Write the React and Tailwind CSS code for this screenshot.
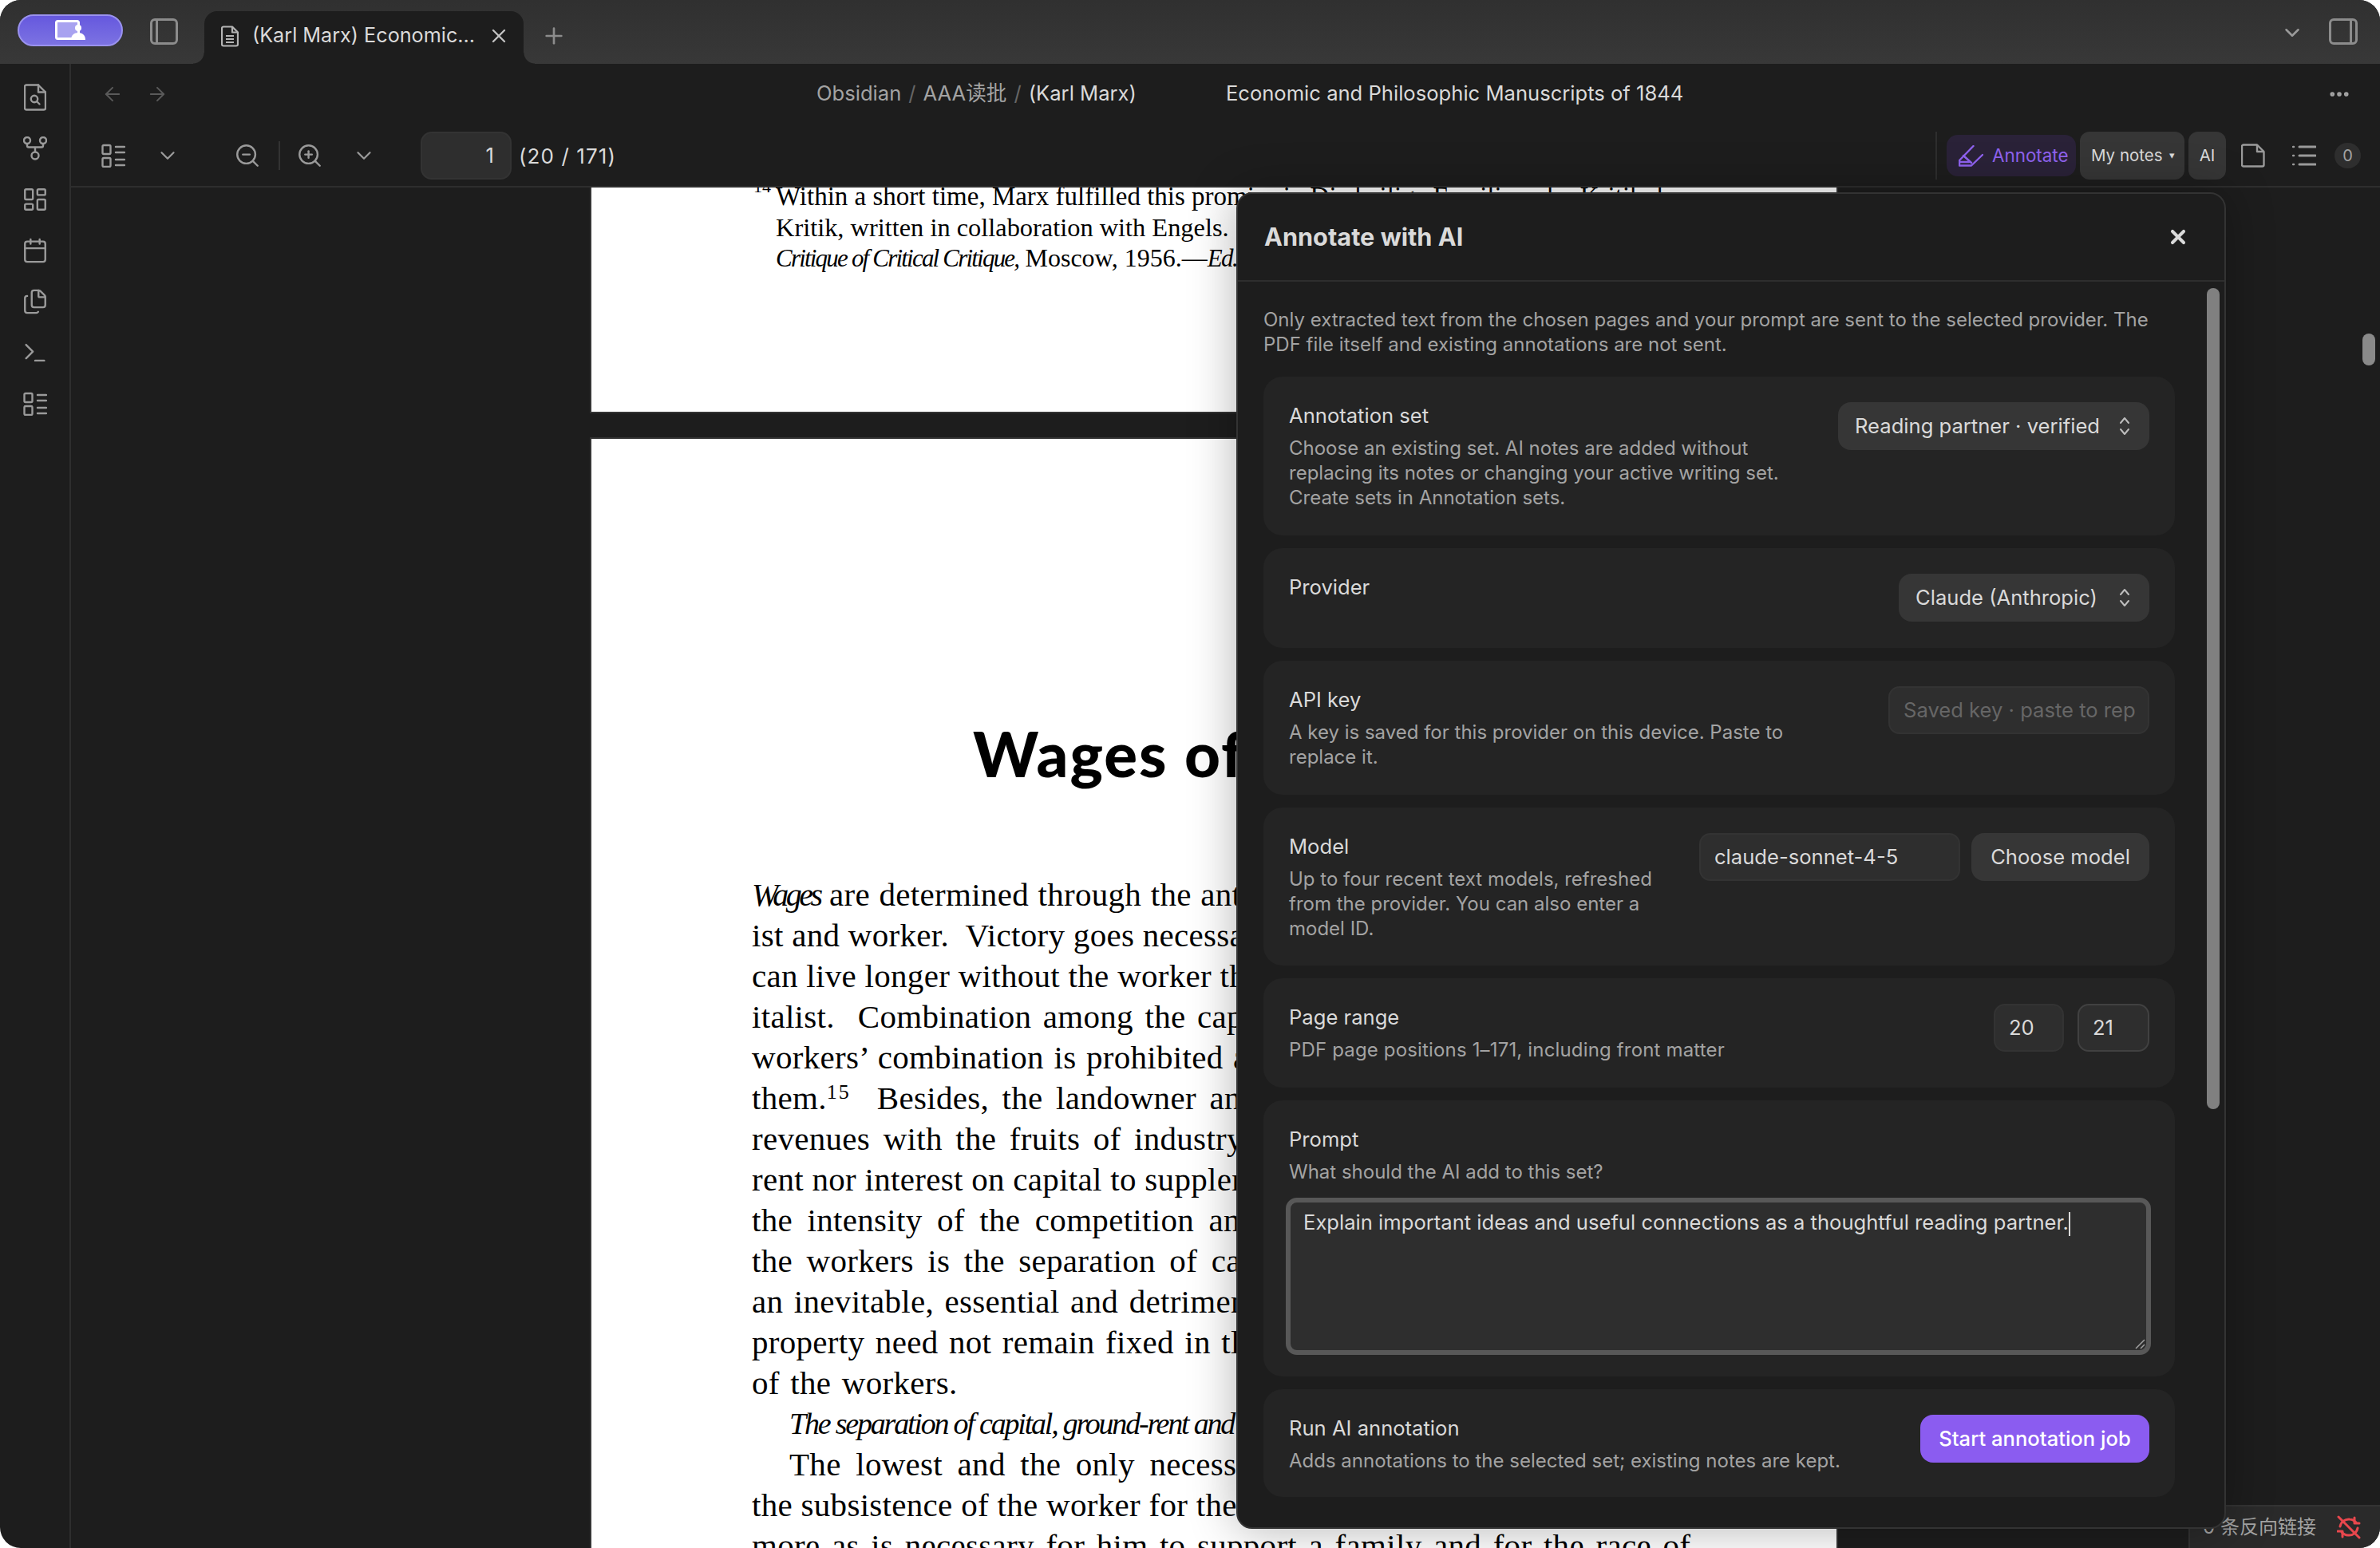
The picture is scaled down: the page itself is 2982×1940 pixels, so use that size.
import React from "react";
import {
  ArrowLeft,
  ArrowRight,
  Calendar,
  ChevronDown,
  Files,
  LayoutDashboard,
  MoreHorizontal,
  Plus,
  Terminal,
  X,
  ZoomIn,
  ZoomOut,
} from "lucide-react";

const bodyLines = [
  { text: "are determined through the ant", lead: "Wages", cls: "[word-spacing:1px]" },
  { text: "ist and worker.  Victory goes necessa", cls: "[word-spacing:0px]" },
  { text: "can live longer without the worker th", cls: "[word-spacing:0px]" },
  { text: "italist.  Combination among the cap", cls: "[word-spacing:4px]" },
  { text: "workers’ combination is prohibited a", cls: "[word-spacing:2px]" },
  { text: "them.", sup: "15", rest: "  Besides, the landowner an", cls: "[word-spacing:6px]" },
  { text: "revenues with the fruits of industry", cls: "[word-spacing:6px]" },
  { text: "rent nor interest on capital to suppler", cls: "[word-spacing:0px]" },
  { text: "the intensity of the competition an", cls: "[word-spacing:8px]" },
  { text: "the workers is the separation of cap", cls: "[word-spacing:7px]" },
  { text: "an inevitable, essential and detrimen", cls: "[word-spacing:3px]" },
  { text: "property need not remain fixed in tl", cls: "[word-spacing:3px]" },
  { text: "of the workers.", cls: "[word-spacing:3px]" },
];

const FileSearchIcon = () => (
  <svg width="28" height="34" viewBox="0 0 28 34" fill="none" stroke="#9a9a9a" strokeWidth="2.4" strokeLinejoin="round" strokeLinecap="round">
    <path d="M3 1.5h15l9 9v20a2 2 0 0 1-2 2H3a2 2 0 0 1-2-2v-27a2 2 0 0 1 2-2z" />
    <path d="M18 1.5v9h9" />
    <circle cx="13" cy="19" r="4.2" />
    <path d="M16.5 22.5l3 3" />
  </svg>
);

const ListIcon = ({ size = 30 }) => (
  <svg width={size} height={size} viewBox="0 0 30 30" fill="none" stroke="#9a9a9a" strokeWidth="2.4" strokeLinecap="round" strokeLinejoin="round">
    <rect x="1.5" y="2" width="10" height="11" rx="1.5" />
    <rect x="1.5" y="18" width="10" height="11" rx="1.5" />
    <path d="M18 4h11M18 11h11M18 20h11M18 27h11" />
  </svg>
);

const GraphIcon = () => (
  <svg width="30" height="30" viewBox="0 0 30 30" fill="none" stroke="#9a9a9a" strokeWidth="2.4">
    <circle cx="5" cy="5" r="4" />
    <circle cx="25" cy="5" r="4" />
    <circle cx="15" cy="24" r="4.5" />
    <path d="M5 9v2.500a2 2 0 0 0 2 2h16a2 2 0 0 0 2-2V9M15 13.500V19.500" />
  </svg>
);

const UpDown = () => (
  <svg width="14" height="24" viewBox="0 0 14 24" fill="none" stroke="#bdbdbd" strokeWidth="2" strokeLinecap="round" strokeLinejoin="round">
    <path d="M2 8l5-6 5 6M2 16l5 6 5-6" />
  </svg>
);

const Field = ({ children, cls }) => (
  <div className={"h-[60px] flex items-center rounded-[14px] bg-[#2e2e2e] border-2 border-[#333333] text-[25.6px] text-[#dadada] px-[17px] whitespace-nowrap overflow-hidden " + cls}>
    {children}
  </div>
);

const Select = ({ children, cls }) => (
  <div className={"h-[60px] flex items-center justify-between rounded-[16px] bg-[#363636] text-[25.6px] text-[#dadada] pl-[21px] pr-[24px] whitespace-nowrap " + cls}>
    {children}
    <UpDown />
  </div>
);

const Card = ({ title, desc, descCls, children, cls }) => (
  <div className={"rounded-[24px] bg-[#242424] p-[32px] flex items-start justify-between " + (cls || "")}>
    <div className={descCls}>
      <div className="text-[25.6px] leading-[34px] text-[#dadada]">{title}</div>
      {desc && <div className="mt-[8px] text-[24px] leading-[31px] text-[#a3a3a3]">{desc}</div>}
    </div>
    {children}
  </div>
);

const ribbonIcons = [
  <FileSearchIcon key="a" />,
  <GraphIcon key="b" />,
  <LayoutDashboard key="c" size={34} color="#9a9a9a" strokeWidth={1.7} />,
  <Calendar key="d" size={34} color="#9a9a9a" strokeWidth={1.7} />,
  <Files key="e" size={34} color="#9a9a9a" strokeWidth={1.7} />,
  <Terminal key="f" size={34} color="#9a9a9a" strokeWidth={1.7} />,
  <ListIcon key="g" />,
];

const App = () => {
  return (
    <div className="w-[2982px] h-[1940px] bg-white font-['Inter','Noto_Sans_CJK_SC',sans-serif]">
      <div className="relative w-full h-full rounded-[26px] overflow-hidden bg-[#1d1d1d] flex flex-col">
        {/* tab bar */}
        <div className="h-[80px] shrink-0 bg-gradient-to-b from-[#303030] to-[#383838] flex pl-[22px] pr-[28px]">
          <div className="mt-[18px] w-[132px] h-[40px] rounded-full bg-gradient-to-b from-[#6658de] to-[#7c72e2] border-2 border-[#9a92ee] flex items-center justify-center">
            <svg width="38" height="26" viewBox="0 0 38 26" fill="none">
              <rect x="1.5" y="1.5" width="28" height="22" rx="2" fill="#a8a2f0" stroke="white" strokeWidth="3" />
              <circle cx="29" cy="10" r="4" fill="white" />
              <path d="M20 25c0-6 4-9 9-9s9 3 9 9z" fill="white" />
            </svg>
          </div>
          <div className="ml-[34px] mt-[23px] w-[35px] h-[33px] rounded-[6px] border-[3px] border-[#8c8c8c] flex">
            <div className="ml-[4px] w-[3px] h-full bg-[#8c8c8c]" />
          </div>
          {/* active tab */}
          <div className="relative ml-[33px] mt-[14px] w-[400px] h-[66px] rounded-t-[16px] bg-[#1d1d1d] flex items-center pl-[21px] pb-[4px] text-[25.2px] text-[#dadada]">
            <span className="absolute -left-[14px] bottom-0 w-[14px] h-[14px] bg-[radial-gradient(circle_at_0_0,transparent_13px,#1d1d1d_14px)]" />
            <span className="absolute -right-[14px] bottom-0 w-[14px] h-[14px] bg-[radial-gradient(circle_at_100%_0,transparent_13px,#1d1d1d_14px)]" />
            <svg width="22" height="27" viewBox="0 0 22 27" fill="none" stroke="#b5b5b5" strokeWidth="2.2" strokeLinejoin="round">
              <path d="M3 1.500h11l7 7v15a2 2 0 0 1-2 2H3a2 2 0 0 1-2-2v-20a2 2 0 0 1 2-2z" />
              <path d="M14 1.500v7h7M6 13h10M6 17h10M6 21h10" />
            </svg>
            <span className="ml-[17px] whitespace-nowrap">(Karl Marx) Economic...</span>
            <X className="ml-[16px]" size={28} color="#c4c4c4" strokeWidth={2} />
          </div>
          <Plus className="ml-[22px] mt-[29px]" size={32} color="#8c8c8c" strokeWidth={2} />
          <ChevronDown className="ml-auto mt-[26px]" size={30} color="#9a9a9a" strokeWidth={2} />
          <div className="ml-[31px] mt-[23px] w-[36px] h-[33px] rounded-[6px] border-[3px] border-[#8c8c8c] flex justify-end">
            <div className="mr-[4px] w-[3px] h-full bg-[#8c8c8c]" />
          </div>
        </div>

        <div className="flex-1 flex min-h-0">
          {/* ribbon */}
          <div className="w-[89px] shrink-0 border-r-2 border-[#2e2e2e] flex flex-col items-center pt-[10px]">
            {ribbonIcons.map((icon, i) => (
              <div key={i} className="h-[64px] flex items-center justify-center">{icon}</div>
            ))}
          </div>

          <div className="flex-1 min-w-0 flex flex-col">
            {/* view header */}
            <div className="h-[73px] shrink-0 flex items-center pl-[38px] pr-[36px] pt-[2px]">
              <ArrowLeft size={28} color="#5a5a5a" strokeWidth={1.7} />
              <ArrowRight className="ml-[28px]" size={28} color="#5a5a5a" strokeWidth={1.7} />
              <div className="ml-[812px] text-[25.6px] text-[#a3a3a3] whitespace-nowrap">
                Obsidian<span className="mx-[9px] text-[#666666]">/</span>AAA读批<span className="mx-[9px] text-[#666666]">/</span>
                <span className="text-[#dadada]">(Karl Marx)</span>
              </div>
              <div className="ml-[112px] text-[25.6px] text-[#dadada] whitespace-nowrap">Economic and Philosophic Manuscripts of 1844</div>
              <MoreHorizontal className="ml-auto" size={30} color="#a3a3a3" strokeWidth={2.5} />
            </div>

            {/* pdf toolbar */}
            <div className="h-[82px] shrink-0 flex items-start pl-[38px] pr-[24px] pt-[12px] border-b-2 border-[#2e2e2e]">
              <div className="mt-[15px]"><ListIcon /></div>
              <ChevronDown className="ml-[38px] mt-[15px]" size={30} color="#9a9a9a" strokeWidth={1.8} />
              <ZoomOut className="ml-[68px] mt-[13px]" size={34} color="#9a9a9a" strokeWidth={1.7} />
              <div className="ml-[22px] mt-[12px] w-[2px] h-[36px] bg-[#333333]" />
              <ZoomIn className="ml-[20px] mt-[13px]" size={34} color="#9a9a9a" strokeWidth={1.7} />
              <ChevronDown className="ml-[36px] mt-[15px]" size={30} color="#9a9a9a" strokeWidth={1.8} />
              <div className="ml-[56px] w-[114px] h-[60px] rounded-[14px] bg-[#2e2e2e] border-2 border-[#333333] flex items-center justify-end pr-[20px] text-[25.6px] text-[#dadada]">1</div>
              <div className="ml-[9px] h-[60px] flex items-center text-[26px] tracking-[1.1px] text-[#dadada] whitespace-nowrap">(20 / 171)</div>
              <div className="ml-auto flex items-start">
                <div className="w-[2px] h-[60px] bg-[#2e2e2e]" />
                <div className="ml-[12px] mt-[4px] w-[162px] h-[52px] rounded-[14px] bg-[#2a2238] flex items-center pl-[15px] text-[#8f62ef] text-[22.4px]">
                  <svg width="31" height="27" viewBox="0 0 31 27" fill="none" stroke="#8f62ef" strokeWidth="2.4" strokeLinejoin="round" strokeLinecap="round">
                    <path d="M18.500 1L1 19v6.500h15L30 12" />
                    <path d="M6 13l10 9M1 21h12" />
                  </svg>
                  <span className="ml-[11px]">Annotate</span>
                </div>
                <div className="ml-[5px] w-[131px] h-[60px] rounded-[12px] bg-[#363636] flex items-center pl-[14px] text-[20.5px] text-[#dadada] whitespace-nowrap">
                  My notes<span className="ml-[8px] text-[13px]">▾</span>
                </div>
                <div className="ml-[5px] w-[47px] h-[60px] rounded-[12px] bg-[#363636] flex items-center justify-center text-[20.5px] text-[#dadada]">AI</div>
                <svg className="ml-[19px] mt-[15px]" width="30" height="30" viewBox="0 0 30 30" fill="none" stroke="#9a9a9a" strokeWidth="2.4" strokeLinejoin="round">
                  <path d="M3 1.500h17l8.500 8.500v16.500a2 2 0 0 1-2 2H3a2 2 0 0 1-2-2v-23a2 2 0 0 1 2-2z" />
                  <path d="M20 1.500V10h8.500" />
                </svg>
                <svg className="ml-[34px] mt-[15px]" width="30" height="30" viewBox="0 0 30 30" fill="none" stroke="#9a9a9a" strokeLinecap="round">
                  <path d="M9 4h20M9 15h20M9 26h20" strokeWidth="3" />
                  <path d="M1 4h1M1 15h1M1 26h1" strokeWidth="2.5" />
                </svg>
                <div className="ml-[23px] mt-[14px] w-[33px] h-[32px] rounded-full bg-[#2e2e2e] flex items-center justify-center text-[20px] text-[#a3a3a3]">0</div>
              </div>
            </div>

            {/* pdf pages */}
            <div className="flex-1 min-h-0 overflow-hidden pl-[650px]">
              <div className="w-[1564px] h-[283px] bg-white border-2 border-t-0 border-[#333333] overflow-hidden pl-[231px] font-['Liberation_Serif',serif] text-[33px] leading-[38.5px] text-black">
                <div className="relative -mt-[8px] whitespace-nowrap">
                  <span className="absolute -left-[28px] top-[-12px] text-[22px]">14</span>
                  Within a short time, Marx fulfilled this promise in Die heilige Familie, oder Kritik der
                </div>
                <div className="whitespace-nowrap text-[32.4px]">Kritik, written in collaboration with Engels.</div>
                <div className="whitespace-nowrap">
                  <i className="text-[31px] tracking-[-1.8px]">Critique of Critical Critique,</i> <span className="text-[32px]">Moscow, 1956.—</span><i className="text-[31px] tracking-[-1.5px]">Ed.</i>
                </div>
              </div>
              <div className="mt-[30px] w-[1564px] h-[1400px] bg-white border-2 border-[#333333] overflow-hidden pl-[201px] text-black font-['Liberation_Serif',serif]">
                <div className="pt-[354px] pl-[277px] h-[546px] font-['Lato',sans-serif] font-black text-[78px] tracking-[2px] leading-[80px] whitespace-nowrap">Wages of</div>
                {bodyLines.map((line, i) => (
                  <div key={i} className={"h-[51px] text-[41px] leading-[51px] tracking-[0.3px] whitespace-pre " + line.cls}>
                    {line.lead && <><i className="text-[40px] tracking-[-3.5px]">{line.lead}</i> </>}
                    {line.text}
                    {line.sup && <sup className="text-[26px] tracking-[2px]">{line.sup}</sup>}
                    {line.rest}
                  </div>
                ))}
                <div className="h-[51px] pl-[47px] text-[38px] tracking-[-2.2px] leading-[51px] whitespace-pre italic">The separation of capital, ground-rent and</div>
                <div className="h-[51px] pl-[47px] text-[41px] leading-[51px] tracking-[0.3px] whitespace-pre [word-spacing:8px]">The lowest and the only necessa</div>
                <div className="h-[51px] text-[41px] leading-[51px] tracking-[0.3px] whitespace-pre [word-spacing:0px]">the subsistence of the worker for the</div>
                <div className="h-[51px] text-[41px] leading-[51px] tracking-[0.3px] whitespace-pre [word-spacing:4px]">more as is necessary for him to support a family and for the race of</div>
              </div>
            </div>
          </div>
        </div>

        {/* main scrollbar */}
        <div className="absolute left-[2960px] top-[418px] w-[16px] h-[40px] rounded-full bg-[#8a8a8a]" />

        {/* status bar */}
        <div className="absolute right-0 bottom-0 w-[240px] h-[54px] bg-[#2a2a2a] border-t-2 border-l-2 border-[#333333] rounded-tl-[14px] flex items-center justify-end pr-[24px] text-[24px] text-[#a3a3a3] whitespace-nowrap">
          0 条反向链接
          <svg className="ml-[26px]" width="30" height="30" viewBox="0 0 30 30" fill="none" stroke="#e8474d" strokeWidth="3" strokeLinecap="round" strokeLinejoin="round">
            <path d="M2 2l26 26" />
            <path d="M22 3v7h6M7 27v-7H1" />
            <path d="M4 14a11 11 0 0 1 12-9 11 11 0 0 1 8 4M26 16a11 11 0 0 1-12 9 11 11 0 0 1-8-4" />
          </svg>
        </div>

        {/* annotate modal */}
        <div className="absolute left-[1549px] top-[241px] w-[1240px] h-[1675px] rounded-[20px] bg-[#1d1d1d] border-2 border-[#333333] shadow-[0_0_60px_rgba(0,0,0,0.3)] flex flex-col">
          <div className="h-[110px] shrink-0 border-b-2 border-[#2e2e2e] flex items-center justify-between pl-[33px] pr-[44px]">
            <div className="text-[30.7px] font-bold text-[#dadada]">Annotate with AI</div>
            <X size={28} color="#dadada" strokeWidth={3.5} />
          </div>
          <div className="relative flex-1 min-h-0 pl-[32px] pr-[62px] pt-[32px] flex flex-col gap-[16px]">
            <div className="absolute left-[1214px] top-[8px] w-[16px] h-[1029px] rounded-full bg-[#808080]" />
            <div className="mb-[9px] text-[24px] leading-[31px] text-[#a3a3a3]">
              Only extracted text from the chosen pages and your prompt are sent to the selected provider. The PDF file itself and existing annotations are not sent.
            </div>
            <Card
              cls="h-[199px]"
              title="Annotation set"
              descCls="w-[680px]"
              desc={<>Choose an existing set. AI notes are added without replacing its notes or changing your active writing set. Create sets in Annotation sets.</>}
            >
              <Select cls="w-[390px]">Reading partner · verified</Select>
            </Card>
            <Card cls="h-[125px]" title="Provider">
              <Select cls="w-[314px]">Claude (Anthropic)</Select>
            </Card>
            <Card
              cls="h-[168px]"
              title="API key"
              descCls="w-[680px]"
              desc="A key is saved for this provider on this device. Paste to replace it."
            >
              <Field cls="w-[327px] !text-[#666666]">Saved key · paste to rep</Field>
            </Card>
            <Card
              cls="h-[198px]"
              title="Model"
              descCls="w-[480px]"
              desc="Up to four recent text models, refreshed from the provider. You can also enter a model ID."
            >
              <div className="flex gap-[14px]">
                <Field cls="w-[327px]">claude-sonnet-4-5</Field>
                <div className="w-[223px] h-[60px] rounded-[16px] bg-[#363636] flex items-center justify-center text-[25.6px] text-[#dadada]">Choose model</div>
              </div>
            </Card>
            <Card cls="h-[137px]" title="Page range" desc={<span className="tracking-[0.16px]">PDF page positions 1–171, including front matter</span>}>
              <div className="flex gap-[17px]">
                <Field cls="w-[88px]">20</Field>
                <Field cls="w-[90px] !border-[#414141]">21</Field>
              </div>
            </Card>
            <div className="h-[346px] rounded-[24px] bg-[#242424] px-[28px] pt-[32px]">
              <div className="pl-[4px] text-[25.6px] leading-[34px] text-[#dadada]">Prompt</div>
              <div className="pl-[4px] mt-[8px] text-[24px] leading-[31px] text-[#a3a3a3]">What should the AI add to this set?</div>
              <div className="relative mt-[17px] w-[1084px] h-[197px] rounded-[14px] bg-[#2e2e2e] border-[6px] border-[#585858] pl-[16px] pt-[8px] text-[25.6px] leading-[34px] text-[#dadada] whitespace-nowrap">
                Explain important ideas and useful connections as a thoughtful reading partner.
                <span className="inline-block align-middle w-[2px] h-[30px] bg-[#dadada]" />
                <svg className="absolute right-[1px] bottom-[1px]" width="14" height="14" viewBox="0 0 14 14" stroke="#a0a0a0" strokeWidth="1.5">
                  <path d="M2 13L13 2M8 13l5-5" />
                </svg>
              </div>
            </div>
            <Card cls="h-[135px]" title="Run AI annotation" desc="Adds annotations to the selected set; existing notes are kept.">
              <div className="h-[60px] w-[287px] rounded-[16px] bg-[#8b5cf0] flex items-center justify-center text-[25.6px] font-medium text-white">Start annotation job</div>
            </Card>
          </div>
        </div>
      </div>
    </div>
  );
};

export default App;
